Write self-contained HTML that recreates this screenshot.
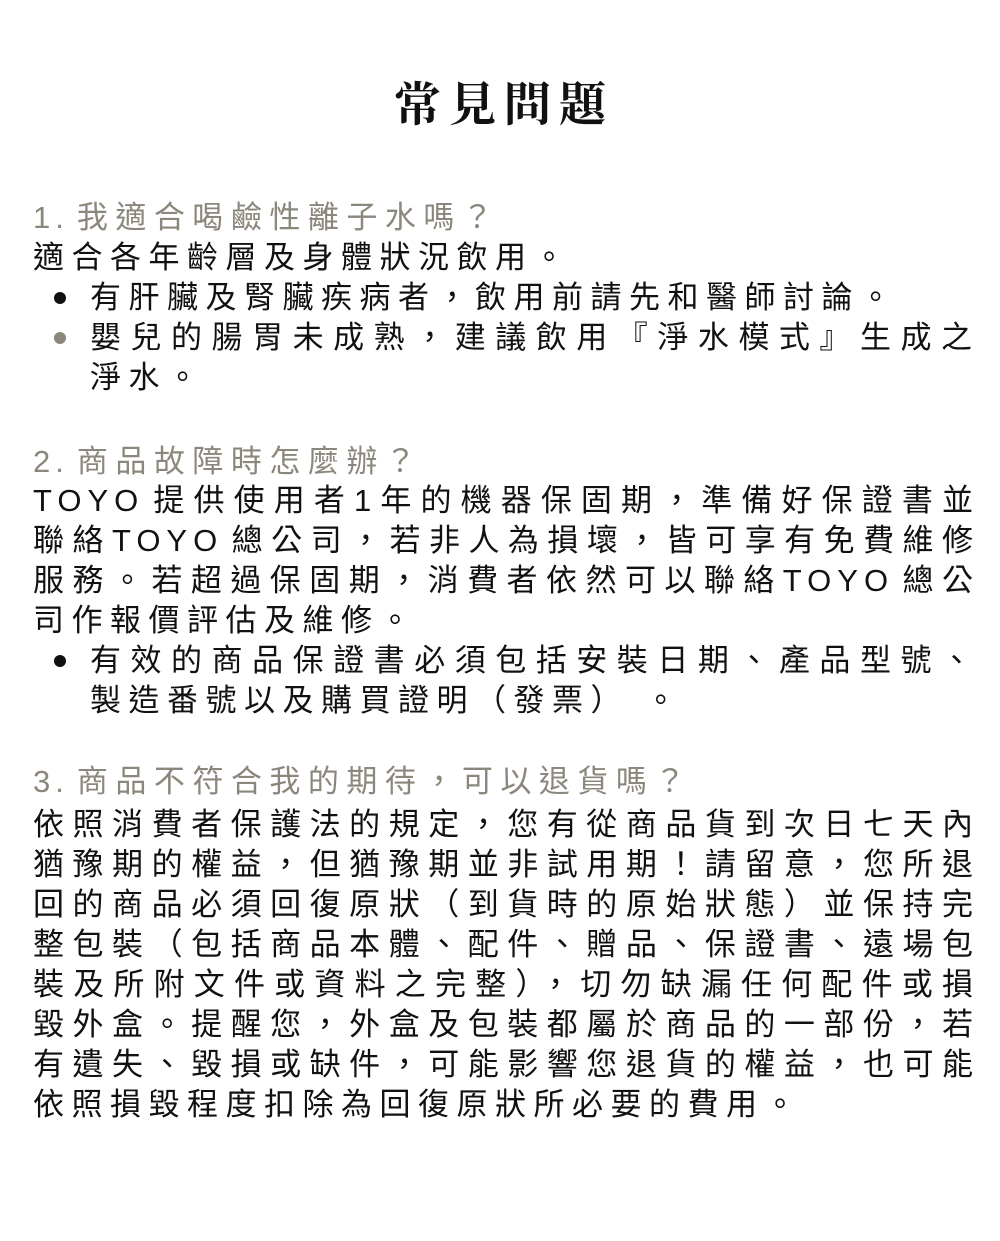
<!DOCTYPE html>
<html><head><meta charset="utf-8"><style>
body{margin:0;background:#fff;width:1000px;height:1241px;position:relative;overflow:hidden;font-family:"Liberation Sans","Noto Sans CJK TC",sans-serif;}
.t{position:absolute;left:0;width:1000px;top:78px;text-align:center;font-family:"Liberation Serif","Noto Serif CJK SC",serif;font-weight:700;font-size:47px;line-height:56px;letter-spacing:8px;text-indent:8px;color:#111;}
.l{position:absolute;left:33px;font-size:31px;line-height:40px;letter-spacing:7.5px;color:#111;white-space:nowrap;}
.q{color:#8c877c;}
.j{width:940px;text-align:justify;text-align-last:justify;letter-spacing:0;white-space:normal;}
.i{left:90px;}
.ij{width:882px;}
.d{position:absolute;width:12px;height:12px;border-radius:50%;left:54px;}
.s{letter-spacing:6px;}
.n{letter-spacing:5px;margin-right:8px;}
</style></head><body>
<div class="t">常見問題</div>

<div class="l q" style="top:198px"><span class="n">1.</span>我適合喝鹼性離子水嗎？</div>
<div class="l" style="top:238px">適合各年齡層及身體狀況飲用。</div>
<div class="d" style="top:292px;background:#111"></div>
<div class="l i" style="top:278px">有肝臟及腎臟疾病者，飲用前請先和醫師討論。</div>
<div class="d" style="top:332px;background:#8c877c"></div>
<div class="l i j ij" style="top:318px">嬰兒的腸胃未成熟，建議飲用『淨水模式』生成之</div>
<div class="l i" style="top:358px">淨水。</div>

<div class="l q" style="top:442px"><span class="n">2.</span>商品故障時怎麼辦？</div>
<div class="l j" style="top:481px"><span class="s">TOYO</span>提供使用者1年的機器保固期，準備好保證書並</div>
<div class="l j" style="top:521px">聯絡<span class="s">TOYO</span>總公司，若非人為損壞，皆可享有免費維修</div>
<div class="l j" style="top:561px">服務。若超過保固期，消費者依然可以聯絡<span class="s">TOYO</span>總公</div>
<div class="l" style="top:601px">司作報價評估及維修。</div>
<div class="d" style="top:655px;background:#111"></div>
<div class="l i j ij" style="top:641px">有效的商品保證書必須包括安裝日期、產品型號、</div>
<div class="l i" style="top:681px">製造番號以及購買證明（發票）&nbsp;。</div>

<div class="l q" style="top:762px"><span class="n">3.</span>商品不符合我的期待，可以退貨嗎？</div>
<div class="l j" style="top:805px">依照消費者保護法的規定，您有從商品貨到次日七天內</div>
<div class="l j" style="top:845px">猶豫期的權益，但猶豫期並非試用期！請留意，您所退</div>
<div class="l j" style="top:885px">回的商品必須回復原狀（到貨時的原始狀態）並保持完</div>
<div class="l j" style="top:925px">整包裝（包括商品本體、配件、贈品、保證書、遠場包</div>
<div class="l j" style="top:965px">裝及所附文件或資料之完整），切勿缺漏任何配件或損</div>
<div class="l j" style="top:1005px">毀外盒。提醒您，外盒及包裝都屬於商品的一部份，若</div>
<div class="l j" style="top:1045px">有遺失、毀損或缺件，可能影響您退貨的權益，也可能</div>
<div class="l" style="top:1085px">依照損毀程度扣除為回復原狀所必要的費用。</div>
</body></html>
